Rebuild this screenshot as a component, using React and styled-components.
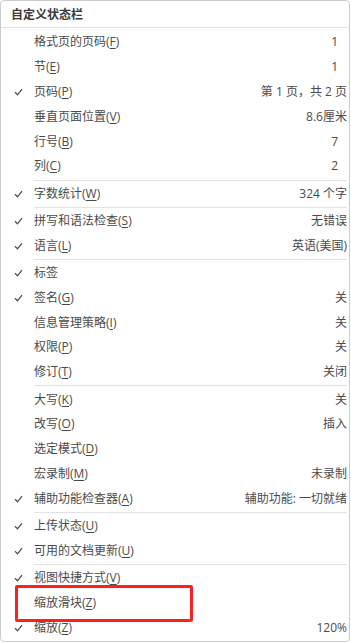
import React from "react";
import styled, { createGlobalStyle } from "styled-components";

const GlobalStyle = createGlobalStyle`
    body {
        margin: 0;
        background: #ffffff;
        font-family: "Open Sans", "Noto Sans CJK SC", sans-serif;
    }
`;

// lista dos itens da barra de status; "sep" marca a linha divisória
const items = [
    { label: "格式页的页码", key: "F", value: "1", pad: true },
    { label: "节", key: "E", value: "1", pad: true },
    { label: "页码", key: "P", value: "第 1 页，共 2 页", checked: true },
    { label: "垂直页面位置", key: "V", value: "8.6厘米" },
    { label: "行号", key: "B", value: "7", pad: true },
    { label: "列", key: "C", value: "2", pad: true },
    "sep",
    { label: "字数统计", key: "W", value: "324 个字", checked: true },
    "sep",
    { label: "拼写和语法检查", key: "S", value: "无错误", checked: true },
    { label: "语言", key: "L", value: "英语(美国)", checked: true },
    "sep",
    { label: "标签", checked: true },
    { label: "签名", key: "G", value: "关", checked: true },
    { label: "信息管理策略", key: "I", value: "关" },
    { label: "权限", key: "P", value: "关" },
    { label: "修订", key: "T", value: "关闭" },
    "sep",
    { label: "大写", key: "K", value: "关" },
    { label: "改写", key: "O", value: "插入" },
    { label: "选定模式", key: "D" },
    { label: "宏录制", key: "M", value: "未录制" },
    { label: "辅助功能检查器", key: "A", value: "辅助功能: 一切就绪", checked: true },
    "sep",
    { label: "上传状态", key: "U", checked: true },
    { label: "可用的文档更新", key: "U", checked: true },
    "sep",
    { label: "视图快捷方式", key: "V", checked: true },
    { label: "缩放滑块", key: "Z", marked: true },
    { label: "缩放", key: "Z", value: "120%", checked: true },
];

const Panel = styled.div`
    position: relative;
    width: 350px;
    height: 642px;
    box-sizing: border-box;
    border: 1px solid #cdcdcd;
    border-radius: 4px;
    background: #ffffff;
    overflow: hidden;
`;

const Header = styled.div`
    height: 26px;
    display: flex;
    align-items: center;
    padding-left: 10px;
    border-bottom: 1px solid #e2e2e2;
    font-size: 12px;
    font-weight: 700;
    color: #3a3a3a;
`;

const List = styled.div`
    padding-top: 2px;
    display: flex;
    flex-direction: column;
`;

const Row = styled.div`
    position: relative;
    height: 24.8px;
    display: grid;
    grid-template-columns: 33px 1fr auto;
    align-items: center;
    padding-right: 2px;
    font-size: 12px;
    line-height: 16px;
    color: #4a4a4a;
`;

const CheckCell = styled.div`
    display: flex;
    justify-content: center;
    padding-left: 1px;
`;

const Label = styled.span`
    white-space: nowrap;
`;

const Key = styled.span`
    text-decoration: underline;
    text-underline-offset: 2px;
`;

const Value = styled.span`
    white-space: nowrap;
    text-align: right;
    padding-right: ${(p) => (p.$pad ? "9px" : "0")};
`;

const Separator = styled.div`
    height: 1px;
    margin: 0.75px 2px 0.75px 33px;
    background: #e3e3e3;
`;

// moldura vermelha de destaque por cima do item
const Highlight = styled.div`
    position: absolute;
    left: 14px;
    top: -6px;
    width: 178px;
    height: 37px;
    box-sizing: border-box;
    border: 3px solid #ff1f1f;
    border-radius: 2px;
    pointer-events: none;
`;

function Check() {
    return (
        <svg width="9" height="8" viewBox="0 0 9 8">
            <polyline points="1,4.3 3.5,6.8 8,1.2" fill="none" stroke="#505050" strokeWidth="1.3" />
        </svg>
    );
}

function StatusRow({ item }) {
    return (
        <Row>
            <CheckCell>{item.checked && <Check />}</CheckCell>
            <Label>
                {item.label}
                {item.key && (
                    <>
                        (<Key>{item.key}</Key>)
                    </>
                )}
            </Label>
            <Value $pad={item.pad}>{item.value}</Value>
            {item.marked && <Highlight />}
        </Row>
    );
}

export default function App() {
    return (
        <>
            <GlobalStyle />
            <Panel>
                <Header>自定义状态栏</Header>
                <List>
                    {items.map((item, i) =>
                        item === "sep" ? <Separator key={i} /> : <StatusRow key={i} item={item} />
                    )}
                </List>
            </Panel>
        </>
    );
}
